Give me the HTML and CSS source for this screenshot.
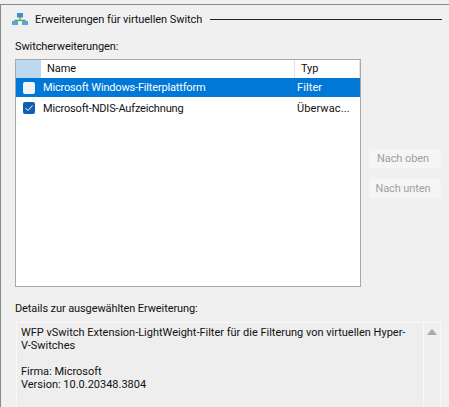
FILE: index.html
```html
<!DOCTYPE html>
<html lang="de">
<head>
  <meta charset="UTF-8" />
  <title>Erweiterungen für virtuellen Switch</title>
  <link rel="stylesheet" href="styles.css">
</head>
<body>
  <div class="frame">
    <div class="section-head">
      <svg class="net-icon" width="16" height="12" viewBox="0 0 16 12">
        <path d="M8 4v3M3 9V7.300h10V9" fill="none" stroke="#5aa83c" stroke-width="1.200" />
        <rect x="5" y="0" width="6" height="4.500" fill="#3d8fd0" />
        <rect x="0" y="8" width="6" height="4" fill="#5aa5de" />
        <rect x="10" y="8" width="6" height="4" fill="#5aa5de" />
      </svg>
      <span class="section-title">Erweiterungen für virtuellen Switch</span>
      <div class="section-rule"></div>
    </div>

    <div class="field-label list-label">Switcherweiterungen:</div>
    <div class="list-area">
      <div class="list">
        <div class="list-header">
          <div class="hd-check"></div>
          <div class="hd-name">Name</div>
          <div class="hd-type">Typ</div>
        </div>
        <div class="row selected">
          <span class="check"></span>
          <span class="row-name">Microsoft Windows-Filterplattform</span>
          <span class="row-type">Filter</span>
        </div>
        <div class="row">
          <span class="check checked">
            <svg width="10" height="8" viewBox="0 0 10 8"><path d="M1.500 4l2.500 2.500 4.500-5" fill="none" stroke="#fff" stroke-width="1" /></svg>
          </span>
          <span class="row-name">Microsoft-NDIS-Aufzeichnung</span>
          <span class="row-type">Überwac...</span>
        </div>
      </div>
      <div class="side-buttons">
        <button class="button" disabled>Nach oben</button>
        <button class="button" disabled>Nach unten</button>
      </div>
    </div>

    <div class="field-label details-label">Details zur ausgewählten Erweiterung:</div>
    <div class="details">
      <div class="details-text">
        <p>WFP vSwitch Extension-LightWeight-Filter für die Filterung von virtuellen Hyper-<br>V-Switches</p>
        <p>Firma: Microsoft<br>Version: 10.0.20348.3804</p>
      </div>
      <div class="scrollbar"><span class="arrow-up"></span></div>
    </div>
  </div>
</body>
</html>
```

FILE: styles.css
```css
html, body {
  margin: 0;
  padding: 0;
  height: 100%;
  overflow: hidden;
  background: #f0f0f0;
}
body {
  padding-top: 4px;
  box-sizing: border-box;
  font-family: "Roboto", "Noto Sans", sans-serif;
  font-size: 11px;
  letter-spacing: -0.1px;
  color: #111;
}
.frame {
  height: 403px;
  box-sizing: border-box;
  border-top: 1px solid #8a8a8a;
  border-left: 1px solid #8a8a8a;
  padding-left: 14px;
  background: #f0f0f0;
}
.section-head {
  display: flex;
  align-items: center;
  height: 28px;
  margin-left: -3px;
  margin-right: 7px;
}
.net-icon {
  flex: none;
}
.section-title {
  margin-left: 7px;
  white-space: nowrap;
  letter-spacing: -0.07px;
}
.section-rule {
  flex: 1;
  height: 1px;
  margin-left: 8px;
  background: #222;
}
.field-label {
  height: 16px;
  line-height: 16px;
}
.list-label {
  margin-top: 6px;
  margin-bottom: 4px;
}
.list-area {
  display: flex;
}
.list {
  width: 346px;
  height: 228px;
  box-sizing: border-box;
  border: 1px solid #a9a9a9;
  background: #fff;
}
.list-header {
  display: flex;
  height: 18px;
  line-height: 18px;
}
.hd-check {
  width: 25px;
  background: #bcd9f0;
}
.hd-name {
  width: 254px;
  padding-left: 6px;
  box-sizing: border-box;
  border-right: 1px solid #e3e3e3;
}
.hd-type {
  flex: 1;
  padding-left: 6px;
  border-right: 1px solid #e3e3e3;
}
.row {
  display: flex;
  align-items: center;
  height: 22px;
}
.row.selected {
  height: 19px;
  background: #0078d7;
  color: #fff;
}
.check {
  display: flex;
  align-items: center;
  justify-content: center;
  width: 12px;
  height: 12px;
  margin-left: 7px;
  margin-right: 8px;
  border-radius: 2px;
  background: #f4f4f4;
  flex: none;
}
.check.checked {
  background: #0f5fb0;
}
.row-name {
  width: 254px;
  white-space: nowrap;
  letter-spacing: -0.17px;
}
.row-type {
  letter-spacing: 0.1px;
}
.side-buttons {
  display: flex;
  flex-direction: column;
  gap: 11px;
  margin-top: 90px;
  margin-left: 8px;
}
.button {
  width: 72px;
  height: 19px;
  padding: 0 4px 0 0;
  border: none;
  border-radius: 2px;
  background: #f5f5f5;
  color: #a0a0a0;
  font-family: inherit;
  font-size: inherit;
  letter-spacing: inherit;
}
.details-label {
  margin-top: 14px;
  margin-bottom: 5px;
}
.details {
  display: flex;
  width: 425px;
  height: 85px;
  margin-left: 1px;
  box-sizing: border-box;
  border: 1px solid #f8f8f8;
  border-bottom: none;
  background: #eeeeee;
}
.details-text {
  width: 407px;
  box-sizing: border-box;
  padding: 3px 0 0 4px;
  border-right: 1px solid #f8f8f8;
  line-height: 13px;
  letter-spacing: -0.01px;
  white-space: nowrap;
}
.details-text p {
  margin: 0 0 13px;
}
.scrollbar {
  flex: 1;
  display: flex;
  justify-content: center;
  padding-top: 6px;
}
.arrow-up {
  width: 0;
  height: 0;
  border-left: 5px solid transparent;
  border-right: 5px solid transparent;
  border-bottom: 6px solid #a8a8a8;
}
```
